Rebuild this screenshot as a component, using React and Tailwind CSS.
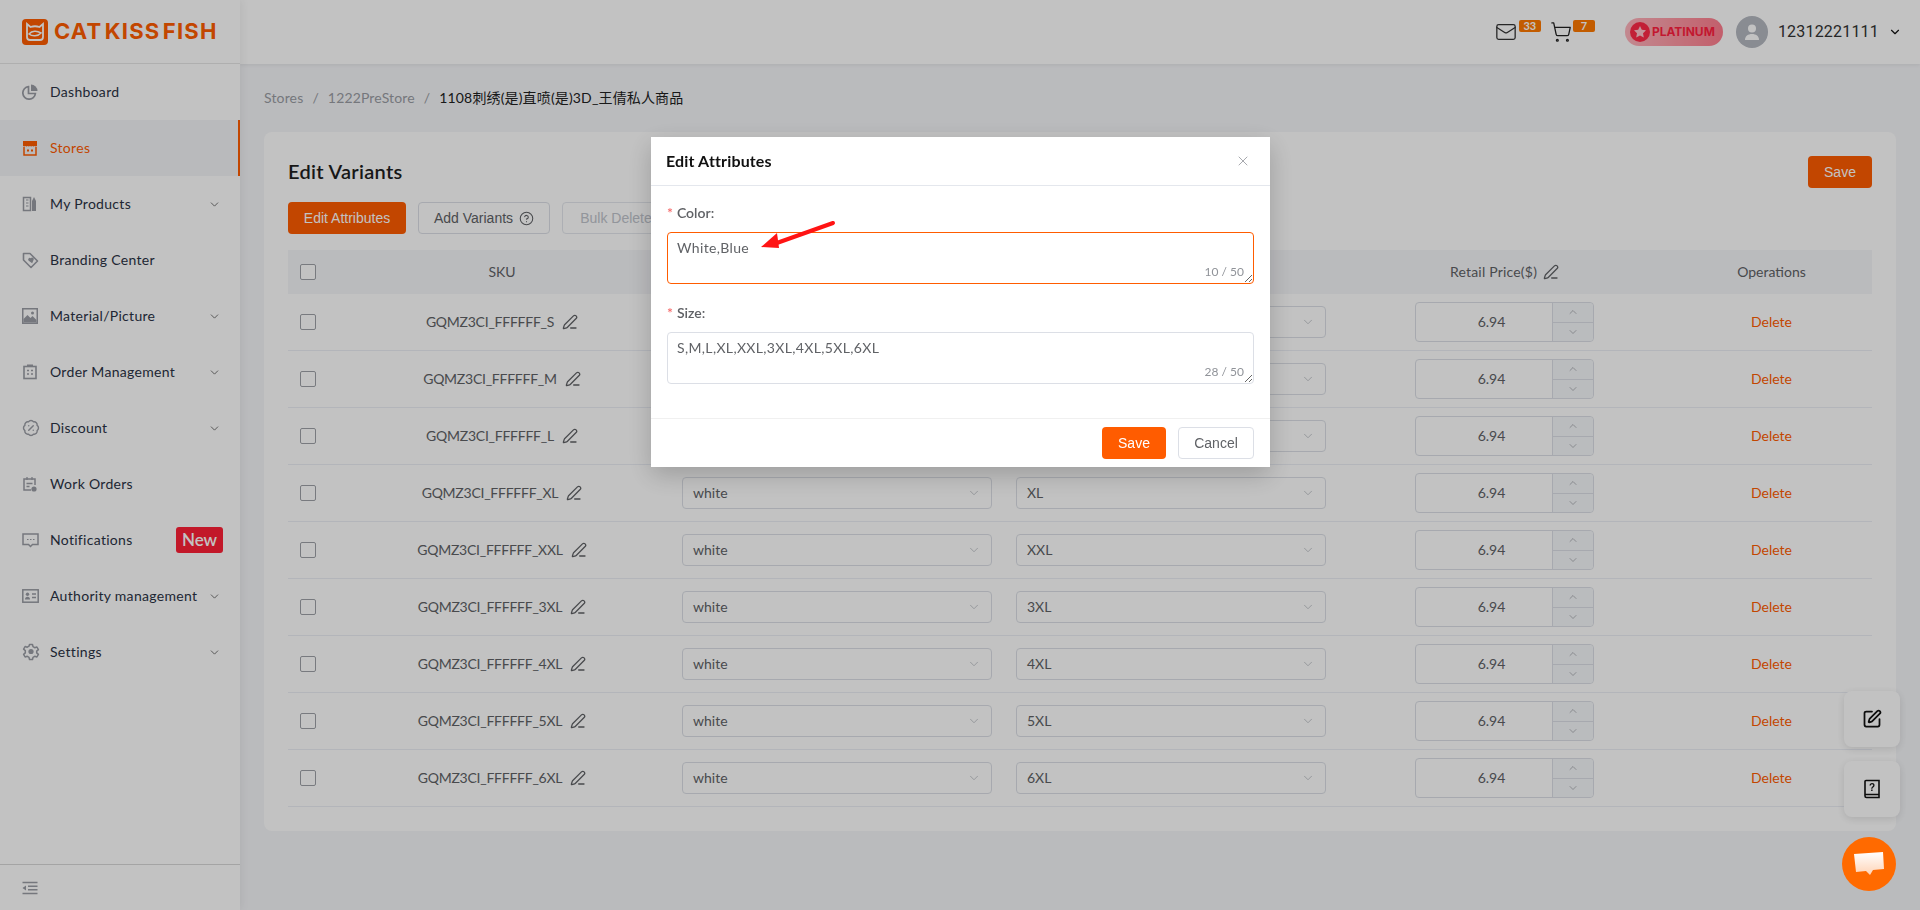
import React from "react";
import { ChevronDown, ChevronUp, PenLine, SquarePen, CircleHelp, BadgePercent, Mail, ShoppingCart, X } from "lucide-react";

const sans = "font-['Lato','Noto_Sans_CJK_SC',sans-serif]";
const I = "#9a9da5";

function DashIcon() {
  return (
    <svg width="16" height="16" viewBox="0 0 16 16" fill="none">
      <path d="M6.500 2.600A6.300 6.300 0 1 0 13.400 9.500H6.500z" stroke={I} strokeWidth="1.700" />
      <path d="M9 0.500A6.500 6.500 0 0 1 15.500 7H9z" fill={I} />
    </svg>
  );
}
function StoreIcon() {
  return (
    <svg width="16" height="16" viewBox="0 0 16 16">
      <path d="M1 1h14v5a2 2 0 0 1-2.300 0 2 2 0 0 1-2.400 0 2 2 0 0 1-2.300 0 2 2 0 0 1-2.300 0 2 2 0 0 1-2.400 0A2 2 0 0 1 1 6z" fill="#ff5c00" />
      <path d="M2 7v8h12V7" fill="none" stroke="#ff5c00" strokeWidth="1.500" />
      <rect x="5" y="9.500" width="2" height="2" fill="#ff5c00" />
      <rect x="9" y="9.500" width="2" height="2" fill="#ff5c00" />
    </svg>
  );
}
function ProductsIcon() {
  return (
    <svg width="16" height="16" viewBox="0 0 16 16" fill="none">
      <rect x="1.500" y="1.500" width="7" height="13" stroke={I} strokeWidth="1.500" />
      <path d="M4 4h2.500M4 7h2.500M4 10h2.500" stroke={I} strokeWidth="1.200" />
      <path d="M10 5l2-4 2 4v10h-4z" fill={I} />
    </svg>
  );
}
function TagIcon() {
  return (
    <svg width="17" height="17" viewBox="0 0 17 17" fill="none">
      <path d="M1.500 1.500h6.500l7.500 7.500-6.500 6.500-7.500-7.500z" stroke={I} strokeWidth="1.600" strokeLinejoin="round" />
      <path d="M9 11.500L6 8.500a1.600 1.600 0 0 1 2.500-2 1.600 1.600 0 0 1 2.500 2z" fill={I} transform="rotate(-10 9 9) translate(0.800 -0.200)" />
    </svg>
  );
}
function PictureIcon() {
  return (
    <svg width="16" height="16" viewBox="0 0 16 16">
      <rect x="0.750" y="0.750" width="14.500" height="14.500" fill="none" stroke={I} strokeWidth="1.500" />
      <path d="M1.500 14.500V11l4-4 3 3 2-2 4 4v2.500z" fill={I} />
      <circle cx="10.500" cy="5" r="1.500" fill={I} />
    </svg>
  );
}
function OrderIcon() {
  return (
    <svg width="16" height="16" viewBox="0 0 16 16" fill="none">
      <rect x="2" y="2.500" width="12" height="12" stroke={I} strokeWidth="1.600" />
      <path d="M5 1.500h6" stroke={I} strokeWidth="2" />
      <path d="M5 6.500h2M9 6.500h2M5 10h2M9 10h2" stroke={I} strokeWidth="1.500" />
    </svg>
  );
}
function WorkIcon() {
  return (
    <svg width="16" height="16" viewBox="0 0 16 16" fill="none">
      <path d="M9 14H2V3h11v6" stroke={I} strokeWidth="1.500" />
      <path d="M5 1v3M10 1v3M4.500 7.500h6M4.500 10.500h3" stroke={I} strokeWidth="1.300" />
      <circle cx="12" cy="13" r="2.600" fill={I} />
    </svg>
  );
}
function NoteIcon() {
  return (
    <svg width="17" height="16" viewBox="0 0 17 16" fill="none">
      <path d="M1 2h15v10.500h-5.500L8.500 14.500 6.500 12.500H1z" stroke={I} strokeWidth="1.500" />
      <path d="M5 7.500h1.500M8 7.500h1.500M11 7.500h1.500" stroke={I} strokeWidth="1.200" />
    </svg>
  );
}
function IdIcon() {
  return (
    <svg width="17" height="14" viewBox="0 0 17 14" fill="none">
      <rect x="0.800" y="0.800" width="15.400" height="12.400" stroke={I} strokeWidth="1.500" />
      <circle cx="5.500" cy="5.300" r="1.700" fill={I} />
      <path d="M3 10.500c0-2 1-2.800 2.500-2.800S8 8.500 8 10.500z" fill={I} />
      <path d="M10 5h4M10 8.500h4" stroke={I} strokeWidth="1.300" />
    </svg>
  );
}
function GearIcon() {
  return (
    <svg width="18" height="18" viewBox="0 0 18 18" fill="none">
      <path d="M7.500 1.500h3l.5 2.200 1.700 1 2.200-.7 1.500 2.600-1.700 1.500v1.800l1.700 1.500-1.500 2.600-2.200-.7-1.700 1-.5 2.200h-3l-.5-2.200-1.700-1-2.200.7-1.500-2.600 1.700-1.500V7.600L1.600 6.100 3.100 3.500l2.200.7 1.700-1z" stroke={I} strokeWidth="1.500" strokeLinejoin="round" />
      <circle cx="9" cy="8.500" r="2.600" fill={I} />
    </svg>
  );
}
function CollapseIcon() {
  return (
    <svg width="16" height="14" viewBox="0 0 16 14" fill="none">
      <path d="M0.500 1.500h15M6 5.200h9.500M6 8.800h9.500M0.500 12.500h15" stroke={I} strokeWidth="1.400" />
      <path d="M4 4.500v5L0.500 7z" fill={I} />
    </svg>
  );
}

const menu = [
  { t: "Dashboard", i: <DashIcon /> },
  { t: "Stores", i: <StoreIcon />, active: true },
  { t: "My Products", i: <ProductsIcon />, c: true },
  { t: "Branding Center", i: <TagIcon /> },
  { t: "Material/Picture", i: <PictureIcon />, c: true },
  { t: "Order Management", i: <OrderIcon />, c: true },
  { t: "Discount", i: <BadgePercent size={18} color={I} strokeWidth={1.9} />, c: true },
  { t: "Work Orders", i: <WorkIcon /> },
  { t: "Notifications", i: <NoteIcon />, n: true },
  { t: "Authority management", i: <IdIcon />, c: true },
  { t: "Settings", i: <GearIcon />, c: true },
];

const rows = ["S", "M", "L", "XL", "XXL", "3XL", "4XL", "5XL", "6XL"];
const cols = "grid grid-cols-[46px_336px_334px_334px_333px_201px] items-center";

function Logo() {
  return (
    <div className="flex items-center gap-[6px]">
      <svg width="26" height="26" viewBox="0 0 26 26">
        <rect width="26" height="26" rx="4" fill="#ff5c00" />
        <path d="M5 5l3.500 3c3-1 6-1 9 0L21 5v13a3 3 0 0 1-3 3H8a3 3 0 0 1-3-3z" fill="none" stroke="#fff" strokeWidth="1.800" />
        <path d="M7 15c3-3.500 8-3.500 12-1-3 3.500-9 3.500-12 1z" fill="none" stroke="#fff" strokeWidth="1.500" />
      </svg>
      <span className="font-['Inter',sans-serif] font-bold text-[#ff5c00] text-[22px] tracking-[1.2px] [word-spacing:-4px] whitespace-nowrap">CAT KISS FISH</span>
    </div>
  );
}

function Sidebar() {
  return (
    <aside className="w-[240px] shrink-0 bg-white flex flex-col z-20 shadow-[2px_0_8px_rgba(0,0,0,0.06)]">
      <div className="h-[64px] border-b border-[#e6e6e6] flex items-center pl-[22px]"><Logo /></div>
      <nav className="flex-1">
        {menu.map((m) => (
          <div key={m.t} className={`relative h-[56px] flex items-center pl-[22px] pr-[18px] text-[14px] ${m.active ? "bg-[#f4f5f8] text-[#ff5c00] border-r-2 border-[#ff5c00]" : "text-[#2b3345]"}`}>
            <span className="w-[28px] flex items-center shrink-0">{m.i}</span>
            <span className="flex-1 whitespace-nowrap tracking-[0.3px] pb-[2px]">{m.t}</span>
            {m.c && <ChevronDown size={13} color="#555" strokeWidth={1.5} className="mr-[1px]" />}
            {m.n && <span className="absolute left-[176px] top-[15px] w-[47px] h-[26px] rounded-[3px] bg-[#ff2036] text-[#fff] text-[17px] font-semibold flex items-center justify-center">New</span>}
          </div>
        ))}
      </nav>
      <div className="h-[46px] border-t border-[#d8d8d8] flex items-center pl-[22px]">
        <CollapseIcon />
      </div>
    </aside>
  );
}

function Header() {
  return (
    <header className="h-[64px] bg-white shrink-0 flex items-center justify-end pr-[18px] shadow-[0_1px_4px_rgba(0,0,0,0.08)]">
      <div className="relative w-[22px] h-[22px] flex items-center mr-[33px]">
        <Mail size={22} color="#333" strokeWidth={1.4} />
        <span className="absolute left-[24px] top-[-1px] w-[22px] h-[12px] rounded-[2px] bg-[#ff7a00] text-white text-[11px] font-bold leading-[12px] text-center">33</span>
      </div>
      <div className="relative w-[22px] h-[22px] flex items-center mr-[53px]">
        <ShoppingCart size={22} color="#222" strokeWidth={1.4} />
        <span className="absolute left-[23px] top-[-1px] w-[22px] h-[12px] rounded-[2px] bg-[#ff7a00] text-white text-[11px] font-bold leading-[12px] text-center">7</span>
      </div>
      <div className="w-[98px] h-[28px] rounded-full bg-gradient-to-r from-[#ffb4bd] to-[#ff7d8e] flex items-center pl-[5px] gap-[2px] mr-[13px]">
        <span className="w-[20px] h-[20px] rounded-full bg-[#ff2a48] flex items-center justify-center">
          <svg width="14" height="14" viewBox="0 0 14 14"><path d="M7 1l1.800 3.800 4.200.5-3 2.900.8 4.200L7 10.400 3.200 12.400 4 8.200 1 5.300l4.200-.5z" fill="#ffc4cc" /></svg>
        </span>
        <span className="font-['Inter',sans-serif] text-[12px] font-bold text-[#ff1f40]">PLATINUM</span>
      </div>
      <span className="w-[32px] h-[32px] rounded-full bg-[#b4b8c0] flex items-center justify-center mr-[10px]">
        <svg width="18" height="18" viewBox="0 0 18 18"><circle cx="9" cy="5.500" r="4" fill="#fff" /><path d="M2 17c0-4 3-6 7-6s7 2 7 6z" fill="#fff" /></svg>
      </span>
      <span className="font-['Roboto',sans-serif] text-[16px] text-[#333] tracking-[0.2px]">12312221111</span>
      <ChevronDown size={14} color="#111" strokeWidth={2} className="ml-[9px]" />
    </header>
  );
}

function Check() {
  return <span className="block w-[16px] h-[16px] border border-[#9ea1a7] rounded-[2px] bg-white ml-[12px]" />;
}

function Select({ v }) {
  return (
    <div className="w-[310px] h-[32px] border border-[#dcdfe6] rounded-[4px] bg-white flex items-center justify-between pl-[10px] pr-[10px] text-[14px] text-[#606266]">
      <span className="pb-[2px]">{v}</span>
      <ChevronDown size={14} color="#b4b7bd" strokeWidth={1.3} />
    </div>
  );
}

function Num() {
  return (
    <div className="w-[179px] h-[40px] border border-[#dcdfe6] rounded-[4px] flex text-[14px] text-[#606266] bg-white">
      <div className="flex-1 flex items-center justify-center pl-[15px] pb-[2px]">6.94</div>
      <div className="w-[41px] border-l border-[#dcdfe6] bg-[#f5f7fa] flex flex-col rounded-r-[4px]">
        <div className="flex-1 flex items-center justify-center border-b border-[#dcdfe6]"><ChevronUp size={12} color="#909399" strokeWidth={1.3} /></div>
        <div className="flex-1 flex items-center justify-center"><ChevronDown size={12} color="#909399" strokeWidth={1.3} /></div>
      </div>
    </div>
  );
}

function Btn({ children, cls }) {
  return <button className={`h-[32px] rounded-[4px] text-[14px] font-['Liberation_Sans',sans-serif] flex items-center justify-center ${cls}`}>{children}</button>;
}

function Card() {
  return (
    <section className="bg-white rounded-[8px] p-[24px] mx-[24px]">
      <div className="flex items-center justify-between h-[32px]">
        <h1 className="text-[20px] font-semibold text-[#1f1f1f] tracking-[0.3px] pb-[2px]">Edit Variants</h1>
        <Btn cls="w-[64px] bg-[#ff5c00] text-white">Save</Btn>
      </div>
      <div className="flex gap-[12px] mt-[14px]">
        <Btn cls="w-[118px] bg-[#ff5c00] text-white">Edit Attributes</Btn>
        <Btn cls="w-[132px] border border-[#dcdfe6] bg-white text-[#606266] gap-[6px]">Add Variants <CircleHelp size={15} strokeWidth={1.7} /></Btn>
        <Btn cls="w-[108px] border border-[#e4e7ed] bg-white text-[#c0c4cc]">Bulk Delete</Btn>
      </div>
      <div className={`${cols} h-[44px] mt-[16px] bg-[#f5f6f9] text-[14px] text-[#606266] text-center`}>
        <Check />
        <span className="pb-[2px]">SKU</span>
        <span className="pb-[2px]">Color</span>
        <span className="pb-[2px]">Size</span>
        <span className="flex items-center justify-center gap-[6px] tracking-[0.2px]"><span className="pb-[2px]">Retail Price($)</span> <PenLine size={16} strokeWidth={1.9} /></span>
        <span className="pb-[2px]">Operations</span>
      </div>
      {rows.map((s) => (
        <div key={s} className={`${cols} h-[57px] border-b border-[#ebeef5] text-[14px] text-[#606266]`}>
          <Check />
          <div className="flex items-center justify-center gap-[8px]">
            <span className="tracking-[-0.25px] pb-[2px]">GQMZ3CI_FFFFFF_{s}</span>
            <PenLine size={16} strokeWidth={1.9} />
          </div>
          <div className="pl-[12px]"><Select v="white" /></div>
          <div className="pl-[12px]"><Select v={s} /></div>
          <div className="flex justify-center"><Num /></div>
          <div className="text-center text-[#ff5c00] pb-[2px]">Delete</div>
        </div>
      ))}
    </section>
  );
}

function Area({ label, value, count, focus }) {
  return (
    <div className="mb-[19px]">
      <div className="h-[20px] flex items-center text-[14px] font-semibold text-[#606266] mb-[9px] pb-[2px]">
        <span className="text-[#f56c6c] mr-[4px]">*</span>{label}
      </div>
      <div className="relative h-[52px]">
        <textarea
          readOnly
          defaultValue={value}
          className={`block w-full h-[52px] resize-y rounded-[4px] border px-[9px] pt-[4px] pb-[5px] text-[14px] leading-[21px] tracking-[0.35px] text-[#606266] outline-none ${focus ? "border-[#ff5c00]" : "border-[#dcdfe6]"}`}
        />
        <span className="absolute right-[10px] bottom-[5px] text-[12px] leading-[14px] text-[#909399]">{count}</span>
      </div>
    </div>
  );
}

function Modal() {
  return (
    <div className="fixed inset-0 z-40 bg-[rgba(0,0,0,0.24)] flex justify-center items-start pt-[137px]">
      <div className="relative ml-[1px] w-[619px] h-[330px] bg-white shadow-[0_8px_24px_rgba(0,0,0,0.2)] flex flex-col">
        <div className="h-[49px] border-b border-[#e4e7ed] flex items-center justify-between pl-[15px] pr-[19px] shrink-0">
          <span className="text-[16px] font-bold text-[#111] tracking-[0.15px]">Edit Attributes</span>
          <X size={16} color="#909399" strokeWidth={1.2} />
        </div>
        <div className="flex-1 px-[16px] pt-[17px]">
          <Area label="Color:" value="White,Blue" count="10 / 50" focus />
          <Area label="Size:" value="S,M,L,XL,XXL,3XL,4XL,5XL,6XL" count="28 / 50" />
        </div>
        <div className="h-[49px] border-t border-[#f0f0f0] flex items-center justify-end gap-[12px] pr-[16px] shrink-0">
          <Btn cls="w-[64px] bg-[#ff5c00] text-white">Save</Btn>
          <Btn cls="w-[76px] border border-[#dcdfe6] bg-white text-[#606266]">Cancel</Btn>
        </div>
        <svg className="absolute left-[109px] top-[83px]" width="76" height="32" viewBox="0 0 76 32">
          <path d="M73 3 L14 24" stroke="#ff1414" strokeWidth="4" strokeLinecap="round" />
          <path d="M1 27 L17 13 L19 28 Z" fill="#ff1414" />
        </svg>
      </div>
    </div>
  );
}

function Floaters() {
  return (
    <>
      <div className="fixed left-[1844px] top-[691px] z-30 flex flex-col gap-[14px]">
        <div className="w-[56px] h-[56px] rounded-[8px] bg-white shadow-[0_2px_8px_rgba(0,0,0,0.12)] flex items-center justify-center"><SquarePen size={20} color="#111" strokeWidth={2.1} /></div>
        <div className="w-[56px] h-[56px] rounded-[8px] bg-white shadow-[0_2px_8px_rgba(0,0,0,0.12)] flex items-center justify-center">
          <svg width="18" height="20" viewBox="0 0 18 20" fill="none">
            <path d="M2 17V2.500A1 1 0 0 1 3 1.500h13v17H3.500A1.500 1.500 0 0 1 2 17zM2 15.500h14" stroke="#111" strokeWidth="1.600" />
            <text x="9" y="12" textAnchor="middle" fontSize="10" fontWeight="700" fill="#111" fontFamily="Liberation Sans">?</text>
          </svg>
        </div>
      </div>
      <div className="fixed left-[1842px] top-[837px] z-50 w-[54px] h-[54px] rounded-full bg-[#ff6a00] flex items-center justify-center">
        <svg width="32" height="28" viewBox="0 0 32 28">
          <defs>
            <linearGradient id="chatg" x1="0" y1="0" x2="0" y2="1">
              <stop offset="0" stopColor="#fff" />
              <stop offset="1" stopColor="#ffd3b5" />
            </linearGradient>
          </defs>
          <path d="M1 4 L30 2 L31 19 L20 20 L17 25 L13 21 L3 22 Z" fill="url(#chatg)" />
        </svg>
      </div>
    </>
  );
}

export default function App() {
  return (
    <div className={`flex h-screen w-full overflow-hidden bg-[#f5f6f9] ${sans}`}>
      <Sidebar />
      <main className="flex-1 flex flex-col min-w-0">
        <Header />
        <div className="h-[68px] flex items-center px-[24px] pb-[2px] text-[14px] text-[#9a9da4] tracking-[0.15px]">
          <span>Stores</span><span className="mx-[9px]">/</span><span>1222PreStore</span><span className="mx-[9px]">/</span>
          <span className="text-[#222]">1108刺绣(是)直喷(是)3D_王倩私人商品</span>
        </div>
        <Card />
      </main>
      <Floaters />
      <Modal />
    </div>
  );
}
